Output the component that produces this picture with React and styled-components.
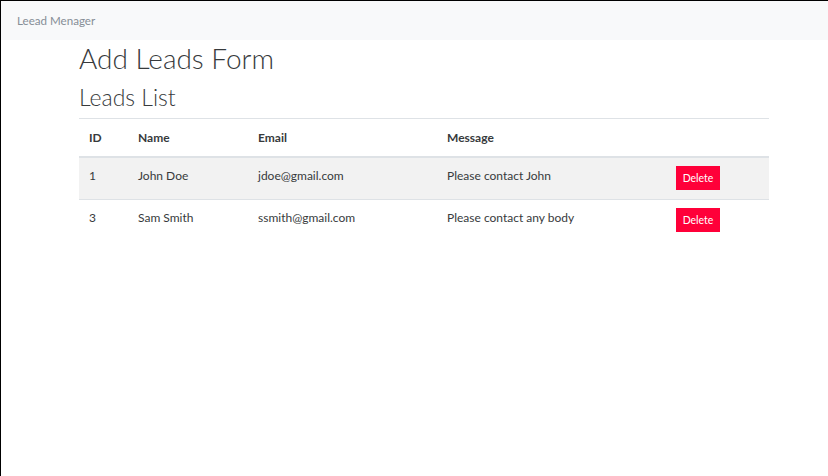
import React from "react";
import styled, { createGlobalStyle } from "styled-components";

const GlobalStyle = createGlobalStyle`
  html, body { margin: 0; padding: 0; background: #fff; }
  body { font-family: Lato, "Noto Sans", sans-serif; color: #373a3c; }
  * { box-sizing: border-box; }
`;

const Frame = styled.div`
  min-height: 100vh;
  border-top: 1px solid #000;
  border-left: 1px solid #000;
`;

const Navbar = styled.nav`
  height: 39px;
  background: #f8f9fa;
  display: flex;
  align-items: center;
  padding: 0 16px;
`;

const Brand = styled.span`
  font-size: 11.6px;
  color: #868e96;
  line-height: 1;
`;

const Container = styled.main`
  width: 690px;
  margin-left: 78px;
`;

const Title = styled.h1`
  font-weight: 300;
  font-size: 28px;
  line-height: 36px;
  margin: 0;
  color: #373a3c;
`;

const Subtitle = styled.h2`
  font-weight: 300;
  font-size: 23px;
  line-height: 28px;
  margin: 7px 0 7px;
  color: #373a3c;
`;

const Table = styled.table`
  width: 100%;
  border-collapse: collapse;
  font-size: 12px;
`;

const Th = styled.th`
  text-align: left;
  font-weight: 700;
  padding: 9px 10px;
  line-height: 19px;
  border-top: 1px solid #dee2e6;
  border-bottom: 2px solid #dee2e6;
  width: ${(p) => p.$w}px;
  vertical-align: top;
`;

const Tr = styled.tr`
  background: ${(p) => (p.$striped ? "#f2f2f2" : "transparent")};
`;

const Td = styled.td`
  padding: 8px 10px 10px;
  line-height: 19px;
  border-top: 1px solid #dee2e6;
  vertical-align: top;
`;

const ButtonCell = styled(Td)`
  padding: 8px 10px 9px;
`;

const DeleteButton = styled.button`
  display: block;
  background: #ff0039;
  color: #fff;
  border: none;
  border-radius: 0;
  font-family: inherit;
  font-size: 10.5px;
  height: 24px;
  width: 44px;
  padding: 0;
  cursor: pointer;
`;

const leads = [
  { id: 1, name: "John Doe", email: "jdoe@gmail.com", message: "Please contact John" },
  { id: 3, name: "Sam Smith", email: "ssmith@gmail.com", message: "Please contact any body" },
];

export default function App() {
  return (
    <>
      <GlobalStyle />
      <Frame>
        <Navbar>
          <Brand>Leead Menager</Brand>
        </Navbar>
        <Container>
          <Title>Add Leads Form</Title>
          <Subtitle>Leads List</Subtitle>
          <Table>
            <thead>
              <tr>
                <Th $w={49}>ID</Th>
                <Th $w={120}>Name</Th>
                <Th $w={189}>Email</Th>
                <Th $w={229}>Message</Th>
                <Th $w={103} />
              </tr>
            </thead>
            <tbody>
              {leads.map((l, i) => (
                <Tr key={l.id} $striped={i % 2 === 0}>
                  <Td>{l.id}</Td>
                  <Td>{l.name}</Td>
                  <Td>{l.email}</Td>
                  <Td>{l.message}</Td>
                  <ButtonCell>
                    <DeleteButton>Delete</DeleteButton>
                  </ButtonCell>
                </Tr>
              ))}
            </tbody>
          </Table>
        </Container>
      </Frame>
    </>
  );
}
